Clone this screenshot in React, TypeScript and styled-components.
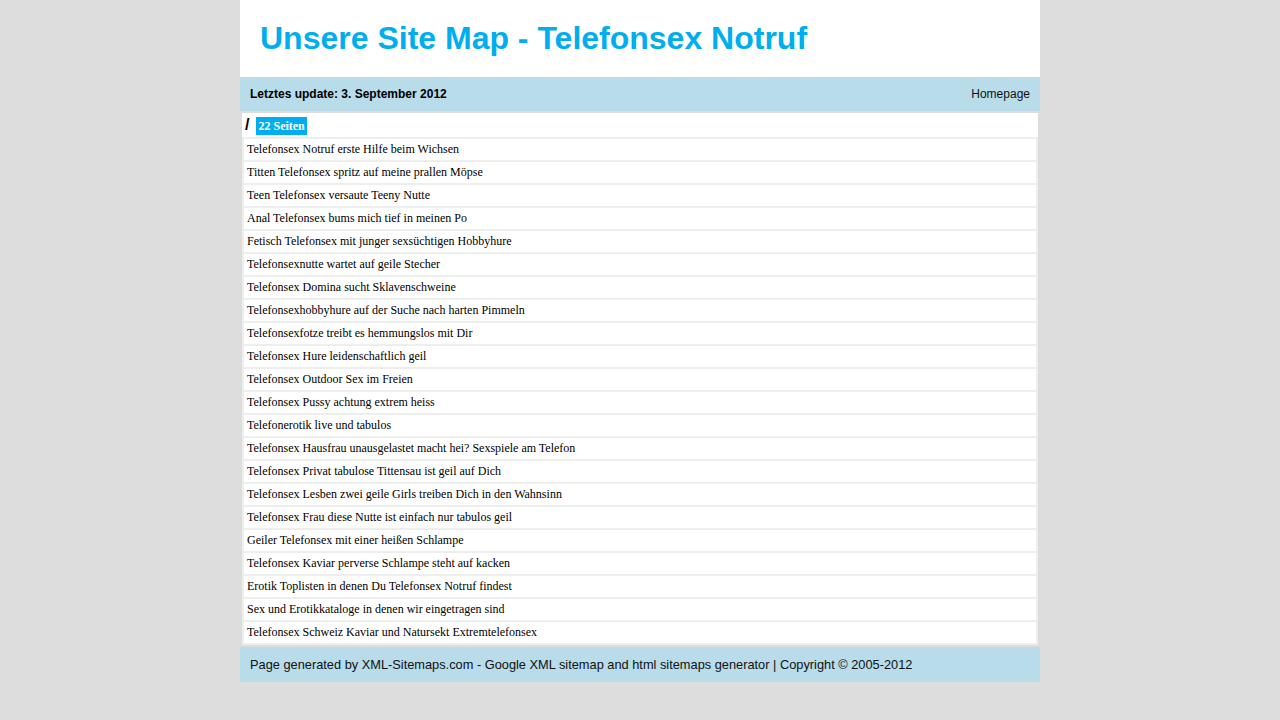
import styled, { createGlobalStyle } from 'styled-components'

const GlobalStyle = createGlobalStyle`
    html, body {
        margin: 0;
        padding: 0;
        background: #dddddd;
        font-family: 'Liberation Sans', Arial, sans-serif;
    }
`

const pages = [
    'Telefonsex Notruf erste Hilfe beim Wichsen',
    'Titten Telefonsex spritz auf meine prallen Möpse',
    'Teen Telefonsex versaute Teeny Nutte',
    'Anal Telefonsex bums mich tief in meinen Po',
    'Fetisch Telefonsex mit junger sexsüchtigen Hobbyhure',
    'Telefonsexnutte wartet auf geile Stecher',
    'Telefonsex Domina sucht Sklavenschweine',
    'Telefonsexhobbyhure auf der Suche nach harten Pimmeln',
    'Telefonsexfotze treibt es hemmungslos mit Dir',
    'Telefonsex Hure leidenschaftlich geil',
    'Telefonsex Outdoor Sex im Freien',
    'Telefonsex Pussy achtung extrem heiss',
    'Telefonerotik live und tabulos',
    'Telefonsex Hausfrau unausgelastet macht hei? Sexspiele am Telefon',
    'Telefonsex Privat tabulose Tittensau ist geil auf Dich',
    'Telefonsex Lesben zwei geile Girls treiben Dich in den Wahnsinn',
    'Telefonsex Frau diese Nutte ist einfach nur tabulos geil',
    'Geiler Telefonsex mit einer heißen Schlampe',
    'Telefonsex Kaviar perverse Schlampe steht auf kacken',
    'Erotik Toplisten in denen Du Telefonsex Notruf findest',
    'Sex und Erotikkataloge in denen wir eingetragen sind',
    'Telefonsex Schweiz Kaviar und Natursekt Extremtelefonsex',
]

const Page = styled.div`
    width: 800px;
    margin: 0 auto;
`

const Header = styled.div`
    height: 77px;
    background: #ffffff;
    display: flex;
    align-items: center;
    padding-left: 20px;
`

const Title = styled.h1`
    margin: 0;
    font-size: 32px;
    font-weight: bold;
    color: #00aeef;
`

const Bar = styled.div<{ $tall?: boolean }>`
    height: ${(p) => (p.$tall ? 35 : 34)}px;
    background: #b8dcea;
    display: flex;
    align-items: center;
    justify-content: space-between;
    padding: 0 10px;
    font-size: ${(p) => (p.$tall ? 12.8 : 12)}px;
    color: #111;
`

const Updated = styled.span`
    font-weight: bold;
    color: #000;
`

const Link = styled.a`
    color: #111;
    text-decoration: none;
`

const Content = styled.div`
    padding: 2px;
`

const Box = styled.div`
    background: #ffffff;
`

const Crumb = styled.div`
    height: 24px;
    display: flex;
    align-items: center;
    gap: 7px;
    padding-left: 3px;
`

const Slash = styled.span`
    font-size: 16px;
    font-weight: bold;
    color: #000;
`

const Badge = styled.span`
    margin-top: 2px;
    background: #00aeef;
    color: #fff;
    font-family: 'Liberation Serif', 'Times New Roman', serif;
    font-weight: bold;
    font-size: 12px;
    height: 18px;
    line-height: 18px;
    padding: 0 2px;
`

const List = styled.div`
    background: #eeeeee;
    padding: 2px;
    display: flex;
    flex-direction: column;
    gap: 2px;
`

const Row = styled.a`
    display: flex;
    align-items: center;
    height: 21px;
    padding-left: 3px;
    background: #ffffff;
    font-family: 'Liberation Serif', 'Times New Roman', serif;
    font-size: 12px;
    color: #000;
    text-decoration: none;
`

export default function App() {
    return (
        <>
            <GlobalStyle />
            <Page>
                <Header>
                    <Title>Unsere Site Map - Telefonsex Notruf</Title>
                </Header>
                <Bar>
                    <Updated>Letztes update: 3. September 2012</Updated>
                    <Link href='#'>Homepage</Link>
                </Bar>
                <Content>
                    <Box>
                        <Crumb>
                            <Slash>/</Slash>
                            <Badge>22 Seiten</Badge>
                        </Crumb>
                        <List>
                            {pages.map((p) => (
                                <Row key={p} href='#'>
                                    {p}
                                </Row>
                            ))}
                        </List>
                    </Box>
                </Content>
                <Bar $tall>
                    <span>
                        Page generated by XML-Sitemaps.com - Google XML sitemap and html sitemaps generator | Copyright © 2005-2012
                    </span>
                </Bar>
            </Page>
        </>
    )
}
